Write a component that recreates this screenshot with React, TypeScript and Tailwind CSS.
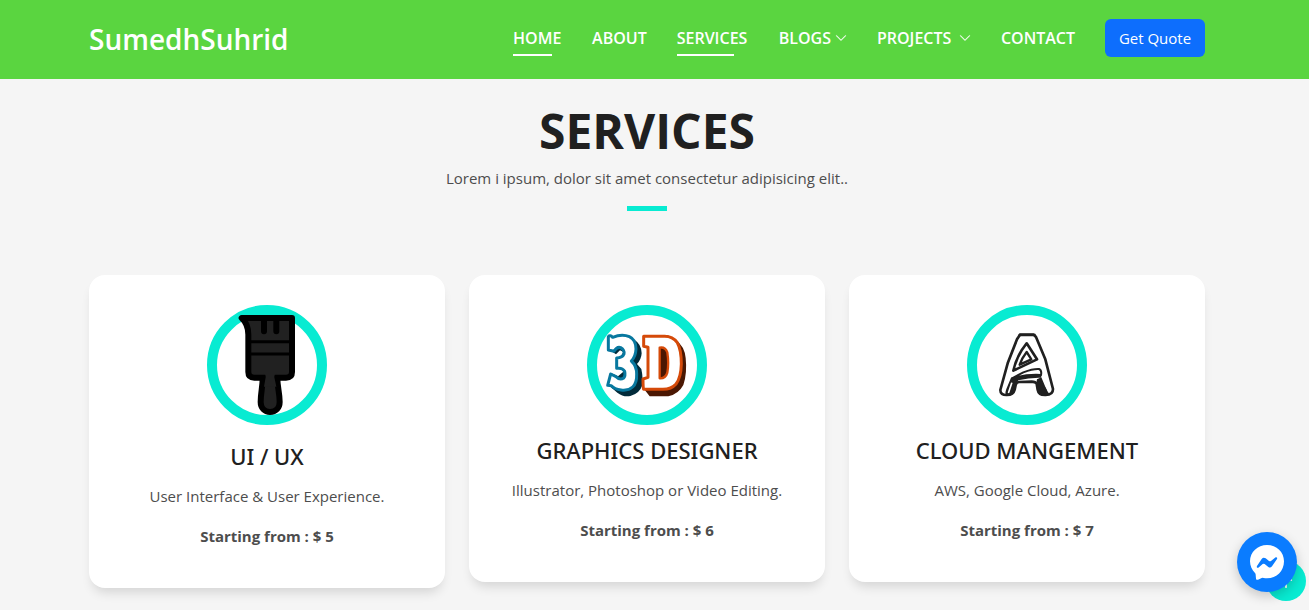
import type { ReactNode } from "react";

type NavItem = { label: string; width: string; active?: boolean; menu?: boolean };

const navItems: NavItem[] = [
  { label: "Home", width: "min-w-[49px]", active: true },
  { label: "About", width: "min-w-[54px]" },
  { label: "Services", width: "min-w-[72px]", active: true },
  { label: "Blogs", width: "min-w-[68px]", menu: true },
  { label: "Projects", width: "min-w-[94px]", menu: true },
  { label: "Contact", width: "min-w-[74px]" },
];

function Chevron() {
  return (
    <svg viewBox="0 0 16 16" className="size-3 shrink-0" fill="currentColor" stroke="currentColor" strokeWidth="0.4" aria-hidden="true">
      <path d="M1.646 4.646a.5.5 0 0 1 .708 0L8 10.293l5.646-5.647a.5.5 0 0 1 .708.708l-6 6a.5.5 0 0 1-.708 0l-6-6a.5.5 0 0 1 0-.708z" />
    </svg>
  );
}

function IconRing({ children }: { children: ReactNode }) {
  return (
    <svg viewBox="21 15 360 360" className="size-[120px]" aria-hidden="true">
      <circle cx="201" cy="195" r="165" fill="#fff" stroke="#08ebd2" strokeWidth="30" />
      {children}
    </svg>
  );
}

function BrushIcon() {
  return (
    <IconRing>
      <g fill="#212121" stroke="#000" strokeWidth="18" strokeLinejoin="round" strokeLinecap="round">
        <path d="M125 54H276V216Q276 233 258 233H163Q145 233 145 216V104Q145 72 125 54Z" />
        <path d="M188 234C188 262 182 278 182 306C182 324 194 336 210 336C227 336 239 324 239 306C239 278 232 262 232 234Z" />
      </g>
      <path d="M190 219H231Q222 223 223 232L229 260H192L197 232Q198 223 190 219Z" fill="#212121" />
      <g fill="none" stroke="#000" strokeLinecap="round">
        <path d="M192 56V94M229 56V94" strokeWidth="18" />
        <path d="M147 125H274M147 162H274" strokeWidth="9" />
      </g>
    </IconRing>
  );
}

function ThreeDIcon() {
  return (
    <IconRing>
      <path
        d="M93 153L108 163L120 151L130 156L119 174L121 195L130 215L114 229L93 219L86 256L112 278Q130 292 151 288Q178 281 186 258Q190 235 184 207L171 192Q184 178 185 160Q184 132 164 120L145 108L90 140Z"
        fill="#022b3a"
      />
      <path
        d="M85 110Q90 104 98 112Q126 100 148 110Q168 119 168 147Q167 170 154 183Q170 197 170 222Q171 249 158 261Q145 273 123 270Q103 267 94 257L83 256L92 222L108 230Q120 242 131 234Q137 227 134 214Q127 202 110 205V174Q128 173 132 162Q134 150 122 143Q111 139 102 154L85 150Z"
        fill="#fff"
        stroke="#08789f"
        strokeWidth="9"
        strokeLinejoin="round"
      />
      <path
        d="M192 267L209 289H265Q296 282 310 255Q322 220 317 174Q314 139 287 119L263 106L230 130L233 241L207 247Z"
        fill="#4a1702"
      />
      <path
        d="M191 109H254Q278 109 292 128Q304 149 304 192Q303 233 288 252Q274 268 249 268H191Q189 264 189 237L204 232V142L191 139Z"
        fill="#fff"
        stroke="#d54a09"
        strokeWidth="9"
        strokeLinejoin="round"
      />
      <path
        d="M239 143Q256 140 262 157Q267 190 262 218Q257 236 239 235Z"
        fill="#4a1702"
        stroke="#d54a09"
        strokeWidth="7"
        strokeLinejoin="round"
      />
    </IconRing>
  );
}

function LetterIcon() {
  return (
    <IconRing>
      <g fill="#fff" stroke="#202020" strokeWidth="8" strokeLinejoin="round">
        <path d="M180 104H221L228 111L256 178L279 267Q279 285 257 285Q236 286 233 269L230 251Q227 246 215 245L177 246Q169 247 167 255L164 269Q160 285 141 285Q121 286 121 270L143 190L171 118Z" />
        <path d="M200 130L231 178L160 212Q167 180 186 149Z" />
        <path d="M200 156L214 178L179 194Q186 174 200 156Z" strokeWidth="7" />
        <path d="M156 235L190 217Q219 206 237 207Q246 211 243 225Q204 222 156 235Z" strokeWidth="6" />
      </g>
      <g fill="#202020">
        <path d="M177 101H226L229 109H173Z" />
        <path d="M153 233Q205 223 245 224L243 233Q208 232 175 241Q165 260 163 273Q159 287 140 287Q133 283 139 267Z" />
        <path d="M231 238L244 232Q254 259 267 281Q258 289 244 286Q232 281 231 268L229 249Z" />
      </g>
      <g fill="none" stroke="#fff" strokeWidth="5" strokeLinecap="round">
        <path d="M155 250L146 277M254 244L266 274" />
      </g>
    </IconRing>
  );
}

const services = [
  { title: "UI / UX", text: "User Interface & User Experience.", price: 5, icon: <BrushIcon />, ring: "mb-[17px]" },
  { title: "Graphics Designer", text: "Illustrator, Photoshop or Video Editing.", price: 6, icon: <ThreeDIcon />, ring: "mb-[11px]" },
  { title: "Cloud Mangement", text: "AWS, Google Cloud, Azure.", price: 7, icon: <LetterIcon />, ring: "mb-[11px]" },
];

export default function App() {
  return (
    <div className="min-h-screen bg-[#f5f5f5] font-['Open_Sans','Noto_Sans',sans-serif] text-[#4d4d4d]">
      <header className="bg-[#5ad540] pr-[15px] text-white">
        <div className="mx-auto flex max-w-[1116px] items-center justify-between pt-[19px] pb-[22px]">
          <a href="#home" className="pt-0.5 text-[28px] leading-9 font-semibold">
            SumedhSuhrid
          </a>
          <nav className="flex items-center gap-[30px]">
            {navItems.map((item) => (
              <a
                key={item.label}
                href={"#" + item.label.toLowerCase()}
                className={"relative flex items-center justify-between gap-1 py-1 text-base leading-6 font-semibold uppercase " + item.width}
              >
                {item.label}
                {item.menu && <Chevron />}
                {item.active && <span className="absolute -bottom-0.5 left-0 h-0.5 w-4/5 bg-white" />}
              </a>
            ))}
            <button type="button" className="h-[38px] w-[100px] rounded-md bg-[#0d6efd] text-[15px] leading-6">
              Get Quote
            </button>
          </nav>
        </div>
      </header>

      <main className="pr-[15px]">
        <div className="mx-auto max-w-[1116px]">
          <section id="services" className="pt-[23px] pb-5">
            <div className="mb-16 flex flex-col items-center text-center">
              <h1 className="text-5xl leading-[58px] font-bold text-[#202020] uppercase">Services</h1>
              <p className="mt-1.5 text-[15px] leading-6">Lorem i ipsum, dolor sit amet consectetur adipisicing elit..</p>
              <span className="mt-4 h-[5px] w-10 bg-[#08ebd2]" />
            </div>
            <div className="grid grid-cols-3 items-start gap-6">
              {services.map((s) => (
                <article
                  key={s.title}
                  className="flex flex-col items-center rounded-2xl bg-white px-6 pt-[30px] pb-10 text-center shadow-[0_8px_12px_-4px_rgba(0,0,0,0.14)]"
                >
                  <div className={s.ring}>{s.icon}</div>
                  <h2 className="font-['Noto_Sans','Open_Sans',sans-serif] text-[22px] leading-7 font-medium text-[#202020] uppercase">{s.title}</h2>
                  <p className="mt-[14px] text-[15px] leading-6">{s.text}</p>
                  <p className="mt-4 text-[15px] leading-6 font-bold">Starting from : $ {s.price}</p>
                </article>
              ))}
            </div>
          </section>
        </div>
      </main>

      <a
        href="#top"
        aria-label="Back to top"
        className="fixed right-[3px] bottom-[9px] flex size-10 items-center justify-center rounded-full bg-[#08ebd2] text-white"
      >
        <svg viewBox="0 0 16 16" className="size-7" fill="none" stroke="currentColor" strokeLinecap="round" strokeLinejoin="round" aria-hidden="true">
          <path d="M8 11.500V4.500M5 7.500L8 4.500L11 7.500" />
        </svg>
      </a>
      <button
        type="button"
        aria-label="Open chat"
        className="fixed right-3 bottom-[18px] flex size-[60px] items-center justify-center rounded-full bg-[#0a7cff] shadow-[0_4px_12px_rgba(0,0,0,0.2)]"
      >
        <svg viewBox="51 36 180 180" className="size-[60px]" aria-hidden="true">
          <path
            d="M141 75C113 75 90 96 90 124C90 138 96 150 105 159Q107 161 107 164L108 176Q109 181 114 179L125 174Q128 173 131 174Q136 175 141 175C170 175 192 153 192 124C192 96 170 75 141 75Z"
            fill="#fff"
          />
          <path
            d="M111 138L125 117Q130 110 137 115L147 123Q150 125 153 123L167 112C170 110 173 114 171 117L156 139Q151 145 145 141L134 132Q131 130 128 132L115 143C111 145 109 141 111 138Z"
            fill="#0a7cff"
          />
        </svg>
      </button>
    </div>
  );
}
